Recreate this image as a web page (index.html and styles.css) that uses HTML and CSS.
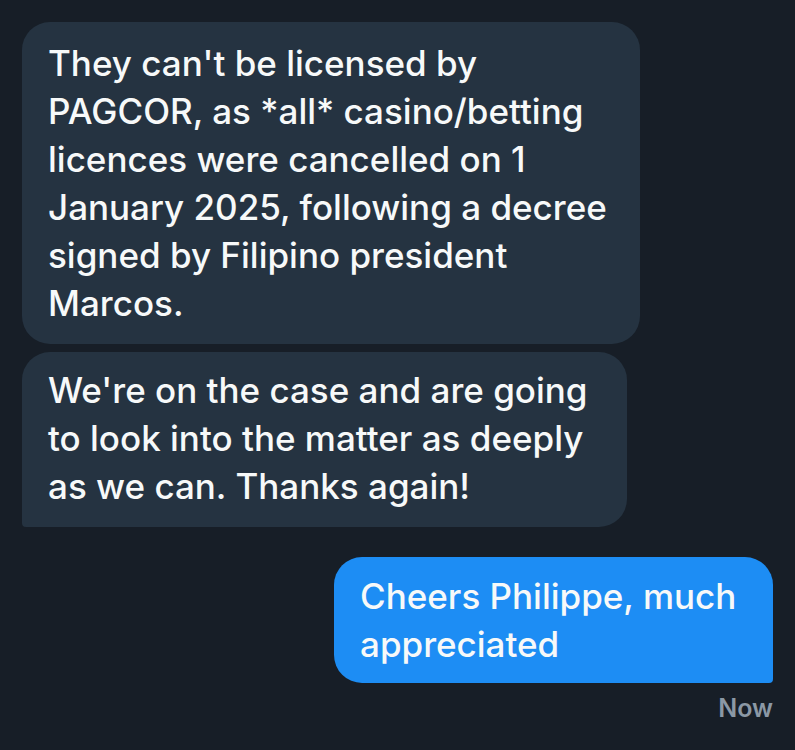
FILE: index.html
```html
<!DOCTYPE html>
<html lang="en">
<head>
    <meta charset="UTF-8">
    <meta name="viewport" content="width=device-width, initial-scale=1.0">
    <title>Messages</title>
    <link rel="stylesheet" href="styles.css">
</head>
<body>
    <div class="chat">
        <div class="msg msg-in first">They can't be licensed by PAGCOR, as *all* casino/betting licences were cancelled on 1 January 2025, following a decree signed by Filipino president Marcos.</div>
        <div class="msg msg-in last">We're on the case and are going to look into the matter as deeply as we can. Thanks again!</div>
        <div class="msg msg-out">Cheers Philippe, much appreciated</div>
        <div class="time">Now</div>
    </div>
</body>
</html>
```

FILE: styles.css
```css
* {
    margin: 0;
    padding: 0;
    box-sizing: border-box;
}
body {
    font-family: 'Inter', 'Noto Sans', sans-serif;
    background: #171e27;
    color: #f7f9f9;
    width: 795px;
    height: 750px;
    overflow: hidden;
}
.chat {
    display: flex;
    flex-direction: column;
    padding: 22px 22px 0;
}
.msg {
    font-size: 35px;
    font-weight: 500;
    line-height: 48px;
    padding: 17px 30px 17px 26px;
    border-radius: 28px;
}
.msg-in {
    background: #253341;
    align-self: flex-start;
}
.msg-in.first {
    width: 618px;
}
.msg-in.last {
    width: 605px;
    margin-top: 8px;
    padding-top: 14px;
    padding-bottom: 17px;
    line-height: 48px;
    border-bottom-left-radius: 4px;
}
.msg-out {
    background: #1d8df4;
    align-self: flex-end;
    width: 439px;
    margin-top: 30px;
    padding: 15px 30px 15px 26px;
    border-bottom-right-radius: 4px;
}
.time {
    align-self: flex-end;
    margin-top: 10px;
    font-size: 25px;
    font-weight: 600;
    color: #8b98a5;
}
```
